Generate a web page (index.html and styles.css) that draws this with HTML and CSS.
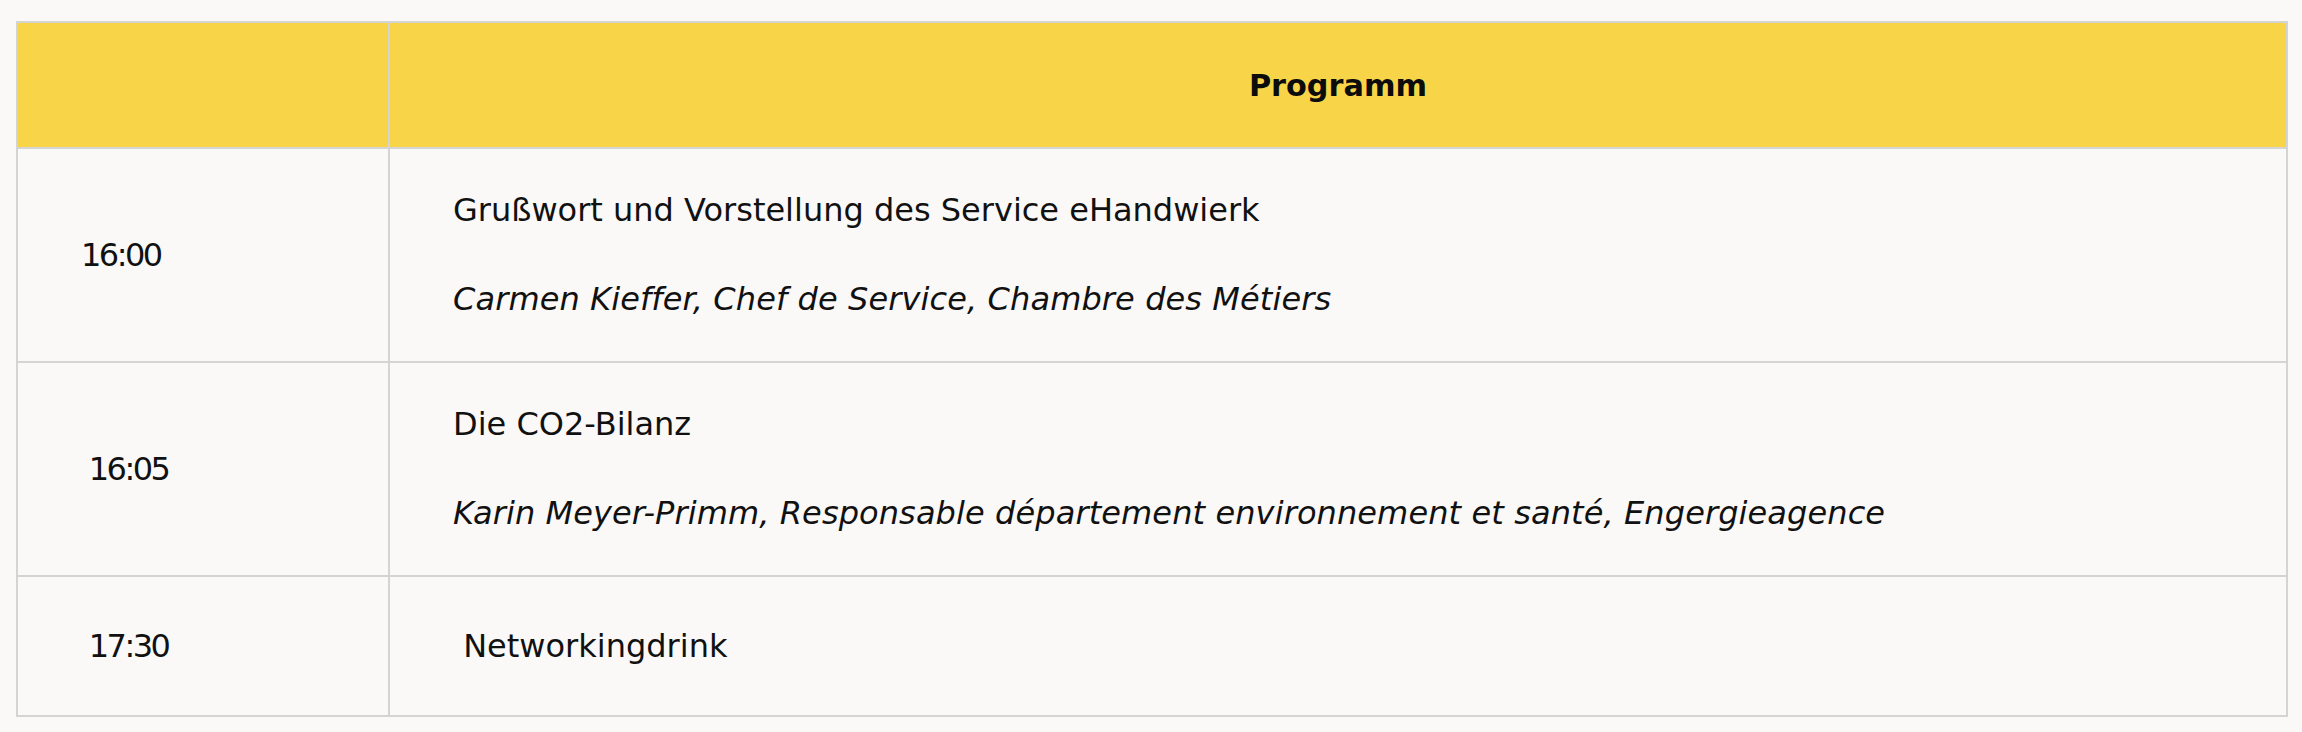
FILE: index.html
```html
<!DOCTYPE html>
<html lang="de">
<head>
<meta charset="utf-8">
<title>Programm</title>
<link rel="stylesheet" href="styles.css">
</head>
<body>
<div class="page">
  <table class="program">
    <colgroup>
      <col class="col-time">
      <col class="col-item">
    </colgroup>
    <thead>
      <tr>
        <th class="head-time"></th>
        <th class="head-item">Programm</th>
      </tr>
    </thead>
    <tbody>
      <tr>
        <td class="time">16:00</td>
        <td class="item">
          <p class="title">Grußwort und Vorstellung des Service eHandwierk</p>
          <p class="speaker">Carmen Kieffer, Chef de Service, Chambre des Métiers</p>
        </td>
      </tr>
      <tr>
        <td class="time">&nbsp;16:05</td>
        <td class="item">
          <p class="title">Die CO2-Bilanz</p>
          <p class="speaker">Karin Meyer-Primm, Responsable département environnement et santé, Engergieagence</p>
        </td>
      </tr>
      <tr class="short">
        <td class="time">&nbsp;17:30</td>
        <td class="item">
          <p class="title">&nbsp;Networkingdrink</p>
        </td>
      </tr>
    </tbody>
  </table>
</div>
</body>
</html>
```
FILE: styles.css
```css
html, body {
  margin: 0;
  padding: 0;
  background: #faf9f7;
}

body {
  font-family: "DejaVu Sans", sans-serif;
  font-size: 32px;
  color: #111111;
}

.page {
  padding: 21px 0 0 16px;
}

.program {
  width: 2272px;
  table-layout: fixed;
  border-collapse: separate;
  border-spacing: 0;
  border-top: 2px solid #d4d4d4;
  border-left: 2px solid #d4d4d4;
  background: #faf9f7;
}

.col-time {
  width: 372px;
}

.col-item {
  width: 1898px;
}

.program th,
.program td {
  border-right: 2px solid #d4d4d4;
  border-bottom: 2px solid #d4d4d4;
  vertical-align: middle;
  line-height: 45px;
  text-align: left;
}

.program th {
  background: #f8d548;
  font-weight: 700;
  font-size: 30.3px;
  padding: 39.5px 0;
  color: #0c0c0c;
}

.program th.head-item {
  text-align: center;
}

.program td {
  padding: 39px 0;
}

.program tr.short td {
  padding: 46.5px 0;
}

.time {
  padding-left: 63px !important;
  letter-spacing: -2.5px;
  white-space: nowrap;
}

.item {
  padding-left: 63px !important;
}

.item p {
  margin: 0;
}

.item .speaker {
  margin-top: 44px;
  font-style: italic;
  letter-spacing: 0.1px;
}
```
